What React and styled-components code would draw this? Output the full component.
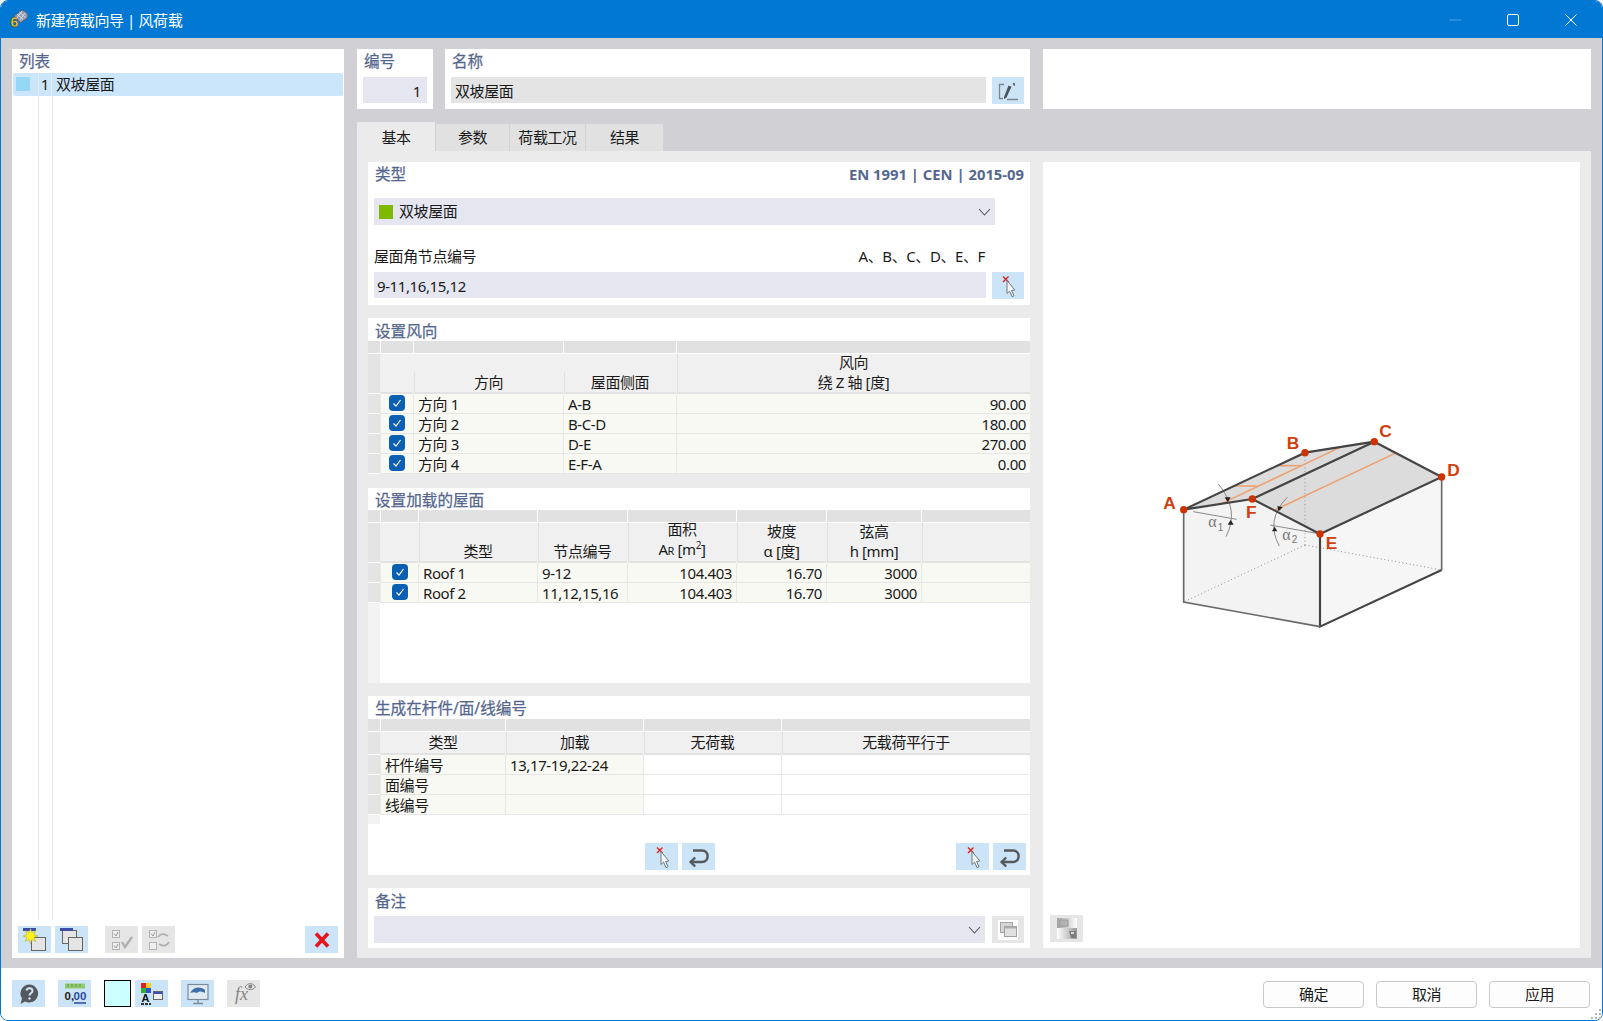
import styled, { createGlobalStyle } from 'styled-components';

const FONT = '"Noto Sans", "Noto Sans CJK SC", sans-serif';

const GlobalStyle = createGlobalStyle`
  html, body {
    margin: 0;
    background: #fff;
  }
  body {
    font-family: ${FONT};
    font-size: 15px;
    letter-spacing: -0.4px;
    color: #1a1a1a;
    overflow: hidden;
  }
  * {
    box-sizing: border-box;
  }
`;

const Window = styled.div`
  width: 1603px;
  height: 1021px;
  display: flex;
  flex-direction: column;
  border: 1px solid #0078d4;
  border-radius: 8px;
  overflow: hidden;
  background: #fff;
`;

const TitleBar = styled.header`
  height: 37px;
  flex: none;
  display: flex;
  align-items: center;
  background: #0078d4;
  color: #fff;
  padding-left: 9px;
  line-height: 20px;
`;

const TitleText = styled.span`
  margin-left: 7px;
`;

const WindowControls = styled.div`
  margin-left: auto;
  margin-right: 2px;
  display: flex;
`;

const WindowControl = styled.span`
  width: 58px;
  height: 37px;
  display: flex;
  align-items: center;
  justify-content: center;
`;

const Main = styled.main`
  flex: 1;
  min-height: 0;
  display: grid;
  grid-template-columns: 332px 1fr;
  column-gap: 13px;
  padding: 11px 11px 10px;
  background: #d1d0d5;
`;

const ListPanel = styled.aside`
  background: #fff;
  display: flex;
  flex-direction: column;
`;

const Label = styled.div`
  color: #56678f;
  font-size: 15.6px;
  letter-spacing: 0;
  line-height: ${(p) => p.$lh || 24}px;
  white-space: nowrap;
  -webkit-text-stroke: 0.25px #56678f;
`;

const ListTitle = styled(Label)`
  height: 24px;
  padding-left: 7px;
`;

const ListRow = styled.div`
  height: 23px;
  margin: 0 1px;
  display: flex;
  align-items: stretch;
  background: #cbe6fb;
  border-radius: 2px;
  line-height: 23px;
`;

const RowSwatch = styled.span`
  width: 25px;
  padding: 4px 0 0 3px;
  &::before {
    content: '';
    display: block;
    width: 14px;
    height: 14px;
    background: #94d8f6;
  }
`;

const RowNumber = styled.span`
  width: 14px;
  text-align: right;
  padding-right: 2px;
  border-left: 1px solid #e4eef6;
  border-right: 1px solid #e4eef6;
`;

const RowText = styled.span`
  padding-left: 4px;
`;

const TreeGuides = styled.div`
  flex: 1;
  width: 15px;
  margin: 0 0 6px 26px;
  border-left: 1px solid #e8e8e8;
  border-right: 1px solid #e8e8e8;
`;

const ListToolbar = styled.div`
  display: flex;
  gap: 4px;
  padding: 0 6px 5px;
`;

const ToolGroupGap = styled.span`
  width: 9px;
`;

const IconButton = styled.button`
  flex: none;
  width: ${(p) => p.$w || 33}px;
  height: 27px;
  padding: 0;
  border: none;
  display: flex;
  align-items: center;
  justify-content: center;
  background: ${(p) => (p.$off ? '#e6e6e6' : '#cbe4f7')};
  margin-left: ${(p) => (p.$push ? 'auto' : '0')};
`;

const RightColumn = styled.section`
  display: flex;
  flex-direction: column;
  min-width: 0;
`;

const TopRow = styled.div`
  height: 60px;
  flex: none;
  display: flex;
  gap: 12px;
`;

const TopCard = styled.div`
  background: #fff;
  padding: 0 6px;
  width: ${(p) => p.$w}px;
  flex: ${(p) => (p.$w ? 'none' : '1')};
  margin-left: ${(p) => p.$ml || 0}px;
`;

const CardTitle = styled(Label)`
  height: 28px;
  padding-left: 1px;
`;

const FieldRow = styled.div`
  display: flex;
  gap: 6px;
`;

const Field = styled.div`
  height: 26px;
  flex: 1;
  background: ${(p) => p.$bg || '#e6e6f1'};
  padding: 1px ${(p) => (p.$align === 'right' ? 6 : 3)}px 0 ${(p) => p.$pl || 3}px;
  display: flex;
  align-items: center;
  justify-content: ${(p) => (p.$align === 'right' ? 'flex-end' : 'flex-start')};
`;

const TabStrip = styled.nav`
  height: 29px;
  margin-top: 13px;
  flex: none;
  display: flex;
  align-items: flex-start;
  gap: 1px;
`;

const Tab = styled.div`
  width: ${(p) => p.$w}px;
  height: ${(p) => (p.$active ? 29 : 28)}px;
  margin-top: ${(p) => (p.$active ? 0 : 2)}px;
  background: ${(p) => (p.$active ? '#ebebeb' : '#e1e1e1')};
  text-align: center;
  line-height: ${(p) => (p.$active ? 31 : 27)}px;
  white-space: nowrap;
`;

const TabPane = styled.div`
  flex: 1;
  min-height: 0;
  display: grid;
  grid-template-columns: 662px 1fr;
  column-gap: 13px;
  padding: 11px 11px 10px;
  background: #ebebeb;
`;

const FormColumn = styled.div`
  display: flex;
  flex-direction: column;
`;

const Section = styled.div`
  background: ${(p) => (p.$bare ? 'transparent' : '#fff')};
  margin-bottom: ${(p) => p.$mb ?? 13}px;
`;

const SectionTitle = styled(Label)`
  background: #fff;
  height: ${(p) => p.$h || 23}px;
  padding: 0 6px 0 7px;
  display: flex;
  justify-content: space-between;
`;

const CodeRef = styled.span`
  font-size: 14.8px;
  font-weight: 700;
  -webkit-text-stroke: 0;
`;

const TypeBody = styled.div`
  padding: 13px 6px 6px;
`;

const SelectRow = styled.div`
  width: 621px;
  height: 27px;
  padding: 0 4px 2px 5px;
  background: #e6e6f1;
  display: flex;
  align-items: center;
`;

const GreenSquare = styled.span`
  width: 14px;
  height: 14px;
  margin: 2px 6px 0 0;
  background: #7fb900;
`;

const Chevron = styled.svg`
  margin: 2px 0 0 auto;
  flex: none;
`;

const NodeLabels = styled.div`
  height: 47px;
  padding: 19px 39px 0 0;
  display: flex;
  justify-content: space-between;
  line-height: 24px;
`;

const TableRow = styled.div`
  display: grid;
  grid-template-columns: ${(p) => p.$cols};
  column-gap: 1px;
`;

const StripRow = styled(TableRow)`
  background: #fff;
  padding-bottom: 1px;
`;

const StripCell = styled.div`
  height: 12px;
  background: #e1e1e1;
`;

const HeadRow = styled(TableRow)`
  background: #f0f0f0;
  height: ${(p) => p.$h}px;
  grid-auto-rows: ${(p) => p.$h}px;
`;

const HeadCell = styled.div`
  display: flex;
  flex-direction: column;
  justify-content: flex-end;
  align-items: center;
  line-height: 20px;
  padding-bottom: ${(p) => p.$pb ?? 0}px;
  border-bottom: 2px solid #e2e2e2;
  white-space: nowrap;
  background: ${(p) => {
    if (p.$divider === 'short') return 'linear-gradient(#e0e0e0, #e0e0e0) -1px bottom / 2px 20px no-repeat';
    if (p.$divider === 'full') return 'linear-gradient(#e0e0e0, #e0e0e0) -1px 0 / 2px 100% no-repeat';
    return 'none';
  }};
`;

const Gutter = styled.div`
  background: #e4e4e4;
  border-bottom: 1px solid #fff;
`;

const BodyRow = styled(TableRow)`
  background: #e8e8e8;
  height: 20px;
  grid-auto-rows: 20px;
`;

const BodyCell = styled.div`
  background: ${(p) => (p.$plain ? '#fff' : '#f8f9f3')};
  border-bottom: 1px solid #e6e6e6;
  padding: 0 4px;
  line-height: 21px;
  white-space: nowrap;
  text-align: ${(p) => p.$align || 'left'};
  display: ${(p) => (p.$center ? 'flex' : 'block')};
  justify-content: center;
`;

const CheckBox = styled.span`
  width: 16px;
  height: 16px;
  margin-top: 1px;
  border-radius: 4px;
  background: #0b5fb3;
  display: flex;
  align-items: center;
  justify-content: center;
`;

const GutterTail = styled.div`
  width: 12px;
  height: ${(p) => p.$h}px;
  background: #f3f3f3;
`;

const ButtonsLine = styled.div`
  padding: 19px 6px 5px 0;
  display: flex;
  gap: 4px;
`;

const Spacer = styled.span`
  width: ${(p) => p.$w}px;
  flex: none;
`;

const NoteBody = styled.div`
  padding: 5px 6px;
  display: flex;
  gap: 7px;
`;

const NoteSelect = styled(SelectRow)`
  width: 611px;
`;

const PreviewPanel = styled.div`
  background: #fff;
  display: flex;
  flex-direction: column;
  align-items: flex-start;
  padding: 248px 0 6px 7px;
`;

const DiagramBox = styled.div`
  margin-left: 90px;
`;

const PreviewButton = styled(IconButton)`
  margin-top: auto;
`;

const Footer = styled.footer`
  position: relative;
  height: 52px;
  flex: none;
  display: flex;
  padding: 12px 12px 0 11px;
  background: #fff;
`;

const FooterIcons = styled.div`
  display: flex;
  gap: 13px;
`;

const Pair = styled.div`
  display: flex;
  gap: 4px;
`;

const ColorSwatch = styled.span`
  width: 27px;
  height: 27px;
  background: #ccffff;
  border: 1px solid #000;
`;

const FooterActions = styled.div`
  margin-left: auto;
  display: flex;
  gap: 12px;
  padding-top: 1px;
`;

const ActionButton = styled.button`
  width: 101px;
  height: 27px;
  padding: 0 0 0 0;
  border: 1px solid #c9c9c9;
  border-radius: 4px;
  background: #fdfdfd;
  color: #1a1a1a;
  font: inherit;
  letter-spacing: inherit;
  line-height: 25px;
`;

const ResizeGrip = styled.svg`
  position: absolute;
  right: 0;
  bottom: 0;
`;

const SmallSub = styled.span`
  font-size: 11px;
`;

const SmallSup = styled.sup`
  font-size: 10px;
  line-height: 0;
`;

const AppIcon = () => (
  <svg width="19" height="21" viewBox="0 0 19 21">
    <path d="M4 7 L11 1.5 C13 0.5 17.5 3.5 18 6.5 C18 8 17 9 16 10 L10.5 14 Z" fill="#8f9cb2" stroke="#4a5568" strokeWidth="0.8" />
    <path d="M7 5 L13 10.5 M9.5 3 L15.5 8.5 M12 2 L7 9 M15 4 L10 11" stroke="#dce3ec" strokeWidth="0.9" />
    <text x="0.5" y="18" fontFamily="Liberation Sans, sans-serif" fontWeight="700" fontSize="14" letterSpacing="0" fill="#ffd23a" stroke="#3a2c00" strokeWidth="0.4">6</text>
  </svg>
);

const EditIcon = () => (
  <svg width="24" height="22" viewBox="0 0 24 22">
    <path d="M8 4.5 H3.5 V18.5 H7" fill="none" stroke="#7b8791" strokeWidth="1.3" />
    <path d="M8 17 L12.5 5.5 L15.5 6.7 L10.5 17.5 L8 19 Z" fill="#4a545e" />
    <path d="M11 19.5 H22" stroke="#7b8791" strokeWidth="1.3" />
    <path d="M17.5 3 L18.5 5.5" stroke="#4a545e" strokeWidth="1.6" />
  </svg>
);

const PickIcon = () => (
  <svg width="24" height="24" viewBox="0 0 24 24">
    <path d="M7 2.5 L12.5 8 M12.5 2.5 L7 8" stroke="#e02020" strokeWidth="1.4" />
    <path d="M11 6.5 V19.5 L13.6 17.2 L16 22.6 L18 21.8 L15.6 16.5 L18.8 16 Z" fill="#f5f7f8" stroke="#6f7981" strokeWidth="1" strokeLinejoin="round" />
  </svg>
);

const UndoIcon = () => (
  <svg width="24" height="22" viewBox="0 0 24 22">
    <path d="M6 4.5 H15 C22.5 4.5 22.5 16 15 16 H4" fill="none" stroke="#56595c" strokeWidth="2.4" />
    <path d="M8.2 11.5 L3.6 16 L8.2 20.5" fill="none" stroke="#56595c" strokeWidth="2.4" />
  </svg>
);

const MiniWindow = ({ x, y, w = 14, h = 13 }) => (
  <g>
    <rect x={x} y={y} width={w} height={h} fill="#e4e4e4" stroke="#666" />
    <rect x={x + 0.5} y={y + 0.5} width={w - 1} height="3" fill="#3d4da8" />
  </g>
);

const NewWindowIcon = () => (
  <svg width="24" height="24" viewBox="0 0 24 24">
    <MiniWindow x="8.5" y="9.5" />
    <path d="M7.5 0.5 L8.9 4.5 L12.8 2.6 L10.9 6.5 L14.9 8 L10.9 9.4 L12.8 13.4 L8.9 11.5 L7.5 15.5 L6.1 11.5 L2.2 13.4 L4.1 9.4 L0.1 8 L4.1 6.5 L2.2 2.6 L6.1 4.5 Z" fill="#fff21e" stroke="#a7a23a" strokeWidth="0.5" />
  </svg>
);

const CopyWindowIcon = () => (
  <svg width="24" height="24" viewBox="0 0 24 24">
    <MiniWindow x="2.5" y="2.5" />
    <MiniWindow x="8.5" y="9.5" />
  </svg>
);

const CheckAllIcon = () => (
  <svg width="24" height="24" viewBox="0 0 24 24">
    <rect x="2.5" y="2.5" width="7" height="7" fill="#eee" stroke="#b4b4b4" />
    <rect x="2.5" y="14.5" width="7" height="7" fill="#eee" stroke="#b4b4b4" />
    <path d="M4 5.5 L6 8 L8 4 M4 17.5 L6 20 L8 16" fill="none" stroke="#9a9a9a" />
    <path d="M12 14 L15 19 L22 9" fill="none" stroke="#b0b0b0" strokeWidth="2.4" />
  </svg>
);

const ToggleAllIcon = () => (
  <svg width="24" height="24" viewBox="0 0 24 24">
    <rect x="2.5" y="2.5" width="7" height="7" fill="#eee" stroke="#b4b4b4" />
    <rect x="2.5" y="14.5" width="7" height="7" fill="#eee" stroke="#b4b4b4" />
    <path d="M4 5.5 L6 8 L8 4" fill="none" stroke="#9a9a9a" />
    <path d="M11 9 C14 5 18 6 21 8 M22 14 C19 19 15 18 12 16" fill="none" stroke="#b0b0b0" strokeWidth="1.8" />
  </svg>
);

const RedXIcon = () => (
  <svg width="18" height="18" viewBox="0 0 18 18">
    <path d="M3 2.5 L15 15.5 M15 2.5 L3 15.5" stroke="#e8141c" strokeWidth="3.6" />
  </svg>
);

const HelpIcon = () => (
  <svg width="24" height="24" viewBox="0 0 24 24">
    <path d="M12.5 2.5 A9 9 0 1 1 8 19.5 L3.5 22 L5 16.5 A9 9 0 0 1 12.5 2.5 Z" fill="#55585c" />
    <path d="M9.5 8.5 C10 5.5 15.5 5.5 15.5 9 C15.5 11 12.5 11 12.5 13.5" fill="none" stroke="#cbe4f7" strokeWidth="2" />
    <circle cx="12.5" cy="16.5" r="1.2" fill="#cbe4f7" />
  </svg>
);

const DecimalsIcon = () => (
  <svg width="24" height="22" viewBox="0 0 24 22">
    <rect x="2" y="0.5" width="20" height="5" fill="#92c86e" />
    <path d="M5 1 V4 M9 1 V4 M13 1 V4 M17 1 V4" stroke="#5d9a3c" />
    <text x="1.5" y="17" fontFamily="Liberation Sans, sans-serif" fontSize="11.5" fontWeight="700" letterSpacing="0" fill="#222">0,</text>
    <text x="10.5" y="17" fontFamily="Liberation Sans, sans-serif" fontSize="11.5" fontWeight="700" letterSpacing="0" fill="#2a4aa0">00</text>
    <path d="M11 20 H23" stroke="#2a4aa0" strokeWidth="1.4" />
  </svg>
);

const StyleIcon = () => (
  <svg width="24" height="24" viewBox="0 0 24 24">
    <rect x="1" y="1" width="5" height="5" fill="#e02020" />
    <rect x="6" y="1" width="5" height="5" fill="#f0d020" />
    <rect x="1" y="6" width="5" height="5" fill="#2fb030" />
    <rect x="6" y="6" width="5" height="5" fill="#3050d0" />
    <text x="1.5" y="20" fontFamily="Liberation Sans, sans-serif" fontSize="11" fontWeight="700" letterSpacing="0" fill="#111">A</text>
    <path d="M1 22 H11" stroke="#333" strokeWidth="2" strokeDasharray="3 1" />
    <rect x="13.5" y="9.5" width="9" height="8" fill="#f0f0f0" stroke="#666" />
    <rect x="14" y="10" width="8" height="2" fill="#3f4fb0" />
  </svg>
);

const MonitorIcon = () => (
  <svg width="24" height="24" viewBox="0 0 24 24">
    <rect x="2" y="2.5" width="20" height="15" fill="#dfeaf4" stroke="#7d8a96" strokeWidth="1.2" />
    <path d="M4 11 C8 5 13 4 19 8 L19 11 C15 9 13 9 11 11 C9 10 6 10 4 11 Z" fill="#3f6ea8" />
    <path d="M12 18 V21 M7 21.5 H17" stroke="#7d8a96" strokeWidth="1.4" />
  </svg>
);

const FormulaIcon = () => (
  <svg width="28" height="27" viewBox="0 0 28 27">
    <text x="5" y="20" fontFamily="Liberation Serif, serif" fontStyle="italic" fontSize="18" letterSpacing="0" fill="#858585">fx</text>
    <path d="M15 7 C17.5 2.5 23 2.5 25.5 7 C23 10.5 17.5 10.5 15 7 Z" fill="none" stroke="#858585" />
    <circle cx="20.3" cy="6.5" r="2" fill="#858585" />
  </svg>
);

const LibraryIcon = () => (
  <svg width="22" height="22" viewBox="0 0 22 22">
    <rect x="1" y="1" width="20" height="20" fill="#fff" />
    <rect x="3.5" y="3.5" width="12" height="10" fill="#d6d6d6" stroke="#a6a6a6" />
    <rect x="7.5" y="7.5" width="12" height="10" fill="#e0e0e0" stroke="#a0a0a0" />
    <rect x="7.5" y="7.5" width="12" height="2" fill="#adadad" />
  </svg>
);

const SaveViewIcon = () => (
  <svg width="24" height="24" viewBox="0 0 24 24">
    <defs>
      <linearGradient id="saveFade" x1="0" y1="0" x2="1" y2="0">
        <stop offset="0" stopColor="#a2a2a2" />
        <stop offset="1" stopColor="#ffffff" />
      </linearGradient>
      <linearGradient id="saveFadeLow" x1="0" y1="0" x2="1" y2="0">
        <stop offset="0" stopColor="#ffffff" />
        <stop offset="1" stopColor="#9a9a9a" />
      </linearGradient>
    </defs>
    <rect x="2" y="1" width="20" height="10" fill="url(#saveFade)" />
    <rect x="2" y="11" width="20" height="11" fill="url(#saveFadeLow)" />
    <rect x="5" y="3" width="8" height="6" fill="#b4b4b4" stroke="#9a9a9a" />
    <path d="M14 14 H21 V21 H16 Z" fill="#7d7d7d" />
    <rect x="16" y="15" width="3" height="2" fill="#d8d8d8" />
  </svg>
);

const ChevronDown = () => (
  <Chevron width="13" height="8" viewBox="0 0 13 8">
    <path d="M1 1 L6.5 7 L12 1" fill="none" stroke="#555" strokeWidth="1.1" />
  </Chevron>
);

const CheckMark = () => (
  <CheckBox>
    <svg width="10" height="10" viewBox="0 0 10 10">
      <path d="M1.5 5.5 L4 8 L8.5 2" fill="none" stroke="#fff" strokeWidth="1.2" />
    </svg>
  </CheckBox>
);

const dot = [
  [131, 299],
  [495, 128],
  [703, 95],
  [905, 201],
  [540, 372],
  [337, 267],
];

const letters = [
  ['A', 70, 298],
  ['B', 440, 116],
  ['C', 718, 82],
  ['D', 922, 198],
  ['E', 557, 416],
  ['F', 318, 323],
];

const RoofDiagram = () => (
  <svg width="330" height="230" viewBox="0 0 990 690" letterSpacing="0">
    <path d="M131 299 L337 267 L540 372 L540 650 L131 576 Z" fill="#f3f3f3" />
    <path d="M540 372 L905 201 L905 480 L540 650 Z" fill="#f6f6f6" />
    <path d="M337 267 L703 95 L905 201 L540 372 Z" fill="#dcdcdc" />
    <path d="M131 299 L495 128 L703 95 L337 267 Z" fill="#dcdcdc" />
    <g fill="none" stroke="#8f8f8f" strokeWidth="3" strokeDasharray="3 8">
      <path d="M495 128 V405" />
      <path d="M495 405 L131 576" />
      <path d="M495 405 L905 480" />
    </g>
    <g fill="none" stroke="#ef9f6e" strokeWidth="4.5">
      <path d="M240 283 L600 112" />
      <path d="M405 300 L765 130" />
      <path d="M285 228 H350" />
      <path d="M415 167 H485" />
    </g>
    <g fill="none" stroke="#8a8a8a" strokeWidth="3">
      <path d="M235 222 Q300 300 258 380" />
      <path d="M442 262 Q375 330 418 408" />
      <path d="M160 305 L290 328" />
      <path d="M390 345 L530 370" />
    </g>
    <g fill="#222">
      <path d="M254 262 H272 L263 276 Z" />
      <path d="M263 344 H281 L272 330 Z" />
      <path d="M412 288 L428 292 L416 304 Z" />
      <path d="M396 364 H412 L404 350 Z" />
    </g>
    <g fill="none" stroke="#444" strokeWidth="6.5">
      <path d="M131 299 L495 128 L703 95 L337 267 L131 299" />
      <path d="M337 267 L540 372 L905 201 L703 95" />
      <path d="M540 372 V650 L905 480" />
    </g>
    <g fill="none" stroke="#6a6a6a" strokeWidth="5">
      <path d="M131 299 V576 L540 650" />
      <path d="M905 201 V480" />
    </g>
    <text x="205" y="352" fontFamily="Liberation Serif, serif" fontSize="48" fill="#777">α</text>
    <text x="233" y="362" fontFamily="Liberation Sans, sans-serif" fontSize="30" fill="#777">1</text>
    <text x="427" y="390" fontFamily="Liberation Serif, serif" fontSize="48" fill="#777">α</text>
    <text x="455" y="400" fontFamily="Liberation Sans, sans-serif" fontSize="30" fill="#777">2</text>
    {dot.map(([cx, cy]) => (
      <circle key={`${cx}-${cy}`} cx={cx} cy={cy} r="11" fill="#cc3300" />
    ))}
    {letters.map(([t, x, y]) => (
      <text key={t} x={x} y={y} fontFamily="Liberation Sans, sans-serif" fontWeight="700" fontSize="52" fill="#d0400f">
        {t}
      </text>
    ))}
  </svg>
);

const WIND_COLS = '12px 32px 149px 112px 1fr';
const ROOF_COLS = '12px 37px 118px 89px 108px 89px 94px 1fr';
const MEMBER_COLS = '12px 124px 137px 137px 1fr';

const windRows = [
  ['方向 1', 'A-B', '90.00'],
  ['方向 2', 'B-C-D', '180.00'],
  ['方向 3', 'D-E', '270.00'],
  ['方向 4', 'E-F-A', '0.00'],
];

const roofRows = [
  ['Roof 1', '9-12', '104.403', '16.70', '3000'],
  ['Roof 2', '11,12,15,16', '104.403', '16.70', '3000'],
];

const memberRows = [
  ['杆件编号', '13,17-19,22-24'],
  ['面编号', ''],
  ['线编号', ''],
];

const gripDots = [
  [9, 1],
  [5, 5],
  [9, 5],
  [1, 9],
  [5, 9],
  [9, 9],
];

const Strip = ({ cols, count }) => (
  <StripRow $cols={cols}>
    {Array.from({ length: count }, (_, i) => (
      <StripCell key={i} />
    ))}
  </StripRow>
);

function App() {
  return (
    <Window>
      <GlobalStyle />
      <TitleBar>
        <AppIcon />
        <TitleText>新建荷载向导 | 风荷载</TitleText>
        <WindowControls>
          <WindowControl>
            <svg width="12" height="2" viewBox="0 0 12 2">
              <path d="M0 1 H12" stroke="#4fa3e3" />
            </svg>
          </WindowControl>
          <WindowControl>
            <svg width="12" height="12" viewBox="0 0 12 12">
              <rect x="0.5" y="0.5" width="11" height="11" rx="1.5" fill="none" stroke="#fff" />
            </svg>
          </WindowControl>
          <WindowControl>
            <svg width="12" height="12" viewBox="0 0 12 12">
              <path d="M0.5 0.5 L11.5 11.5 M11.5 0.5 L0.5 11.5" stroke="#fff" />
            </svg>
          </WindowControl>
        </WindowControls>
      </TitleBar>

      <Main>
        <ListPanel>
          <ListTitle>列表</ListTitle>
          <ListRow>
            <RowSwatch />
            <RowNumber>1</RowNumber>
            <RowText>双坡屋面</RowText>
          </ListRow>
          <TreeGuides />
          <ListToolbar>
            <IconButton><NewWindowIcon /></IconButton>
            <IconButton><CopyWindowIcon /></IconButton>
            <ToolGroupGap />
            <IconButton $off><CheckAllIcon /></IconButton>
            <IconButton $off><ToggleAllIcon /></IconButton>
            <IconButton $push><RedXIcon /></IconButton>
          </ListToolbar>
        </ListPanel>

        <RightColumn>
          <TopRow>
            <TopCard $w={76}>
              <CardTitle>编号</CardTitle>
              <Field $align="right">1</Field>
            </TopCard>
            <TopCard $w={585}>
              <CardTitle>名称</CardTitle>
              <FieldRow>
                <Field $bg="#e4e4e4" $pl={4}>双坡屋面</Field>
                <IconButton $w={32}><EditIcon /></IconButton>
              </FieldRow>
            </TopCard>
            <TopCard $ml={1} />
          </TopRow>

          <TabStrip>
            <Tab $w={78} $active>基本</Tab>
            <Tab $w={73}>参数</Tab>
            <Tab $w={75}>荷载工况</Tab>
            <Tab $w={77}>结果</Tab>
          </TabStrip>

          <TabPane>
            <FormColumn>
              <Section>
                <SectionTitle>
                  类型
                  <CodeRef>EN 1991 | CEN | 2015-09</CodeRef>
                </SectionTitle>
                <TypeBody>
                  <SelectRow>
                    <GreenSquare />
                    双坡屋面
                    <ChevronDown />
                  </SelectRow>
                  <NodeLabels>
                    <span>屋面角节点编号</span>
                    <span>A、B、C、D、E、F</span>
                  </NodeLabels>
                  <FieldRow>
                    <Field>9-11,16,15,12</Field>
                    <IconButton $w={32}><PickIcon /></IconButton>
                  </FieldRow>
                </TypeBody>
              </Section>

              <Section $bare $mb={14}>
                <SectionTitle $lh={26}>设置风向</SectionTitle>
                <Strip cols={WIND_COLS} count={5} />
                <HeadRow $cols={WIND_COLS} $h={40}>
                  <Gutter />
                  <HeadCell />
                  <HeadCell $divider="short">方向</HeadCell>
                  <HeadCell $divider="short">屋面侧面</HeadCell>
                  <HeadCell $divider="full">
                    <span>风向</span>
                    <span>绕 Z 轴 [度]</span>
                  </HeadCell>
                </HeadRow>
                {windRows.map(([dir, side, angle]) => (
                  <BodyRow $cols={WIND_COLS} key={dir}>
                    <Gutter />
                    <BodyCell $center><CheckMark /></BodyCell>
                    <BodyCell>{dir}</BodyCell>
                    <BodyCell>{side}</BodyCell>
                    <BodyCell $align="right">{angle}</BodyCell>
                  </BodyRow>
                ))}
              </Section>

              <Section>
                <SectionTitle $h={22}>设置加载的屋面</SectionTitle>
                <Strip cols={ROOF_COLS} count={8} />
                <HeadRow $cols={ROOF_COLS} $h={40}>
                  <Gutter />
                  <HeadCell />
                  <HeadCell $divider="full">类型</HeadCell>
                  <HeadCell $divider="full">节点编号</HeadCell>
                  <HeadCell $divider="full">
                    <span>面积</span>
                    <span>A<SmallSub>R</SmallSub> [m<SmallSup>2</SmallSup>]</span>
                  </HeadCell>
                  <HeadCell $divider="full">
                    <span>坡度</span>
                    <span>α [度]</span>
                  </HeadCell>
                  <HeadCell $divider="full">
                    <span>弦高</span>
                    <span>h [mm]</span>
                  </HeadCell>
                  <HeadCell $divider="full" />
                </HeadRow>
                {roofRows.map(([name, nodes, area, slope, rise]) => (
                  <BodyRow $cols={ROOF_COLS} key={name}>
                    <Gutter />
                    <BodyCell $center><CheckMark /></BodyCell>
                    <BodyCell>{name}</BodyCell>
                    <BodyCell>{nodes}</BodyCell>
                    <BodyCell $align="right">{area}</BodyCell>
                    <BodyCell $align="right">{slope}</BodyCell>
                    <BodyCell $align="right">{rise}</BodyCell>
                    <BodyCell />
                  </BodyRow>
                ))}
                <GutterTail $h={80} />
              </Section>

              <Section>
                <SectionTitle>生成在杆件/面/线编号</SectionTitle>
                <Strip cols={MEMBER_COLS} count={5} />
                <HeadRow $cols={MEMBER_COLS} $h={23}>
                  <Gutter />
                  <HeadCell $pb={1}>类型</HeadCell>
                  <HeadCell $pb={1} $divider="full">加载</HeadCell>
                  <HeadCell $pb={1} $divider="full">无荷载</HeadCell>
                  <HeadCell $pb={1} $divider="full">无载荷平行于</HeadCell>
                </HeadRow>
                {memberRows.map(([name, load]) => (
                  <BodyRow $cols={MEMBER_COLS} key={name}>
                    <Gutter />
                    <BodyCell>{name}</BodyCell>
                    <BodyCell>{load}</BodyCell>
                    <BodyCell $plain />
                    <BodyCell $plain />
                  </BodyRow>
                ))}
                <GutterTail $h={9} />
                <ButtonsLine>
                  <Spacer $w={273} />
                  <IconButton><PickIcon /></IconButton>
                  <IconButton><UndoIcon /></IconButton>
                  <Spacer $w={233} />
                  <IconButton><PickIcon /></IconButton>
                  <IconButton><UndoIcon /></IconButton>
                </ButtonsLine>
              </Section>

              <Section $mb={0}>
                <SectionTitle $h={23} $lh={26}>备注</SectionTitle>
                <NoteBody>
                  <NoteSelect>
                    <ChevronDown />
                  </NoteSelect>
                  <IconButton $off $w={32}><LibraryIcon /></IconButton>
                </NoteBody>
              </Section>
            </FormColumn>

            <PreviewPanel>
              <DiagramBox>
                <RoofDiagram />
              </DiagramBox>
              <PreviewButton $off><SaveViewIcon /></PreviewButton>
            </PreviewPanel>
          </TabPane>
        </RightColumn>
      </Main>

      <Footer>
        <FooterIcons>
          <IconButton><HelpIcon /></IconButton>
          <IconButton><DecimalsIcon /></IconButton>
          <Pair>
            <ColorSwatch />
            <IconButton><StyleIcon /></IconButton>
          </Pair>
          <IconButton><MonitorIcon /></IconButton>
          <IconButton $off><FormulaIcon /></IconButton>
        </FooterIcons>
        <FooterActions>
          <ActionButton>确定</ActionButton>
          <ActionButton>取消</ActionButton>
          <ActionButton>应用</ActionButton>
        </FooterActions>
        <ResizeGrip width="12" height="12" viewBox="0 0 12 12">
          {gripDots.map(([x, y]) => (
            <rect key={`${x}-${y}`} x={x} y={y} width="2" height="2" fill="#b3b3b3" />
          ))}
        </ResizeGrip>
      </Footer>
    </Window>
  );
}

export default App;
